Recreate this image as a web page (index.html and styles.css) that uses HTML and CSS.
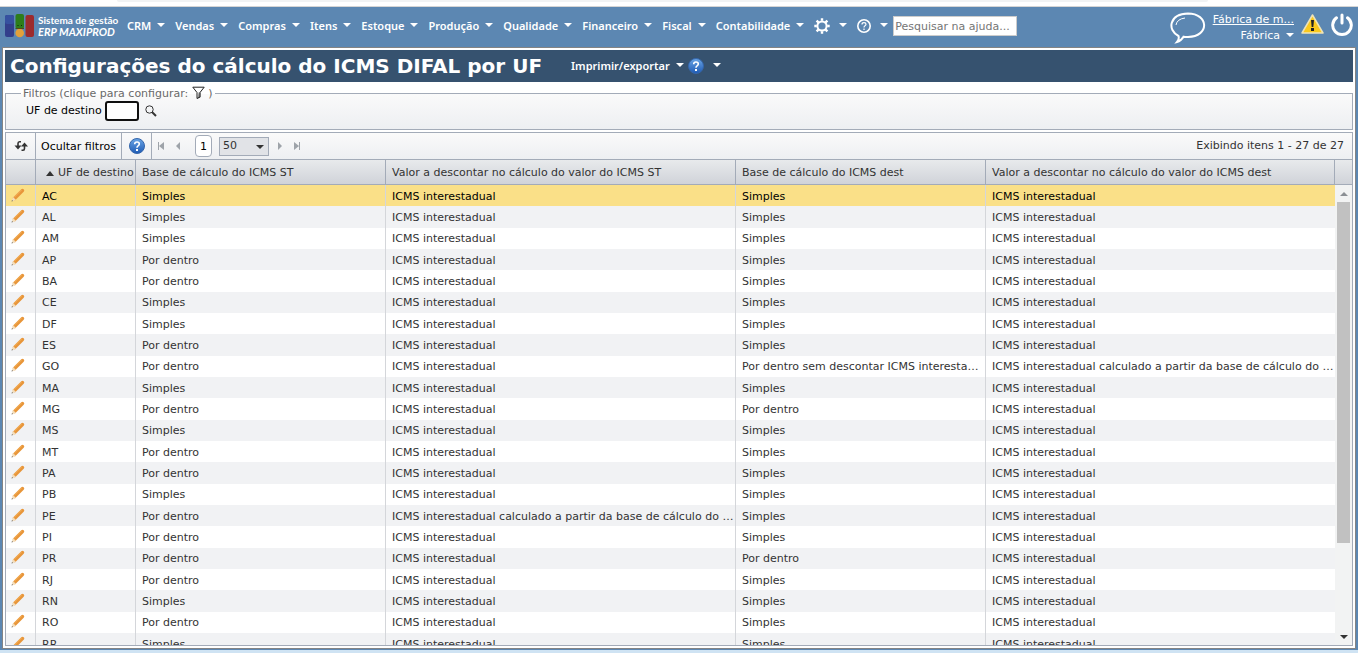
FILE: index.html
```
<!DOCTYPE html>
<html lang="pt-BR">
<head>
  <meta charset="UTF-8">
  <meta name="viewport" content="width=device-width, initial-scale=1.0">
  <title>Configurações do cálculo do ICMS DIFAL por UF</title>
  <link rel="stylesheet" href="styles.css">
</head>
<body>

<!-- Shared icons -->
<svg class="defs" width="0" height="0" aria-hidden="true">
  <defs>
    <linearGradient id="blue" x1="0" y1="0" x2="0" y2="1">
      <stop offset="0" stop-color="#6aa5e6"/>
      <stop offset="1" stop-color="#1f5bb4"/>
    </linearGradient>
  </defs>
  <symbol id="pencil" viewBox="0 0 14 14">
    <path d="M3.500 10.500L11.500 2.500" stroke="#e8963a" stroke-width="3.400" stroke-linecap="round"/>
    <path d="M3 9.500L10.500 2" stroke="#f4b35e" stroke-width="1"/>
    <path d="M.8 13.200L2 9l3 3z" fill="#f3dcb8"/>
    <path d="M.6 13.400l.4-1.300.9.900z" fill="#444"/>
  </symbol>
  <symbol id="help" viewBox="0 0 16 16">
    <circle cx="8" cy="8" r="7.500" fill="url(#blue)" stroke="#3566ab"/>
    <path d="M5.700 6.200q0-2.200 2.300-2.200t2.300 2q0 1-1.200 1.800T8 9.700" fill="none" stroke="#fff" stroke-width="1.600"/>
    <rect x="7" y="11" width="2" height="2" fill="#fff"/>
  </symbol>
</svg>

<div class="browser-edge"></div>

<header class="topbar">
  <a href="#" class="brand">
    <svg width="30" height="24" viewBox="0 0 30 24" aria-hidden="true">
      <rect x="0" y="1" width="9" height="22" rx="2" fill="#333f8c"/>
      <rect x="0" y="1" width="9" height="9" rx="2" fill="#3651a0"/>
      <rect x="10.500" y="0" width="8.500" height="15" rx="2" fill="#2d7d1a"/>
      <rect x="20.500" y="1" width="8.500" height="22" rx="2" fill="#9c2b2d"/>
      <circle cx="14.700" cy="19" r="4.300" fill="#e2a03a"/>
      <path d="M10.500 14.500h8.500" stroke="#514a18"/>
      <path d="M12.500 11.500h1M16 11.500h1" stroke="#0c2c06"/>
    </svg>
    <span class="brand-text">Sistema de gestão<em>ERP MAXIPROD</em></span>
  </a>

  <nav class="menu">
    <a href="#">CRM</a>
    <a href="#">Vendas</a>
    <a href="#">Compras</a>
    <a href="#">Itens</a>
    <a href="#">Estoque</a>
    <a href="#">Produção</a>
    <a href="#">Qualidade</a>
    <a href="#">Financeiro</a>
    <a href="#">Fiscal</a>
    <a href="#">Contabilidade</a>
    <a href="#" class="menu-icon" aria-label="Configurações">
      <svg width="16" height="16" viewBox="0 0 16 16" fill="none" stroke="#fff">
        <circle cx="8" cy="8" r="4.600" stroke-width="2"/>
        <path d="M8 .3v2.500M8 13.200v2.500M.3 8h2.500M13.200 8h2.500M2.600 2.600l1.800 1.800M11.600 11.600l1.800 1.800M13.400 2.600l-1.800 1.800M4.400 11.600l-1.800 1.800" stroke-width="2.400"/>
      </svg>
    </a>
    <a href="#" class="menu-icon" aria-label="Ajuda">
      <svg width="14" height="14" viewBox="0 0 14 14" fill="none" stroke="#fff">
        <circle cx="7" cy="7" r="6.200" stroke-width="1.600"/>
        <path d="M5 5.500q0-1.800 2-1.800t2 1.600q0 .9-1 1.400T7 8.500M7 9.500v1.500" stroke-width="1.200"/>
      </svg>
    </a>
  </nav>

  <input type="text" class="help-search" placeholder="Pesquisar na ajuda..." aria-label="Pesquisar na ajuda">

  <div class="account">
    <a href="#" aria-label="Chat">
      <svg width="36" height="32" viewBox="0 0 36 32" fill="none" stroke="#fff">
        <path d="M8.500 24C-3 18-1 2 18 1.500c21 0 22 23 0 23.500-1.500 0-3 0-4.500-.3Q11 29 7 30q2.500-3 1.500-6z" stroke-width="2"/>
        <path d="M6 13q1-6 9-7" stroke-width="1"/>
      </svg>
    </a>
    <div class="account-names">
      <a href="#" class="company">Fábrica de m...</a>
      <a href="#" class="user">Fábrica</a>
    </div>
    <a href="#" aria-label="Avisos">
      <svg width="23" height="22" viewBox="0 0 23 22">
        <path d="M11.500 3L22 21H1z" fill="#fbc91d" stroke="#efe3b6" stroke-width="1.500" stroke-linejoin="round"/>
        <path d="M10 8h3l-.7 7h-1.600z" fill="#222"/>
        <rect x="10" y="16" width="3" height="3" fill="#222"/>
      </svg>
    </a>
    <a href="#" aria-label="Sair">
      <svg width="22" height="26" viewBox="0 0 22 26" fill="none" stroke="#fff" stroke-width="3" stroke-linecap="round">
        <path d="M5.500 5.800a9.300 9.300 0 1 0 11 0M11 3v8"/>
      </svg>
    </a>
  </div>
</header>

<main class="panel">
  <div class="title-bar">
    <h1>Configurações do cálculo do ICMS DIFAL por UF</h1>
    <a href="#" class="export">Imprimir/exportar</a>
    <a href="#" class="title-help" aria-label="Ajuda"><svg width="16" height="16"><use href="#help"/></svg></a>
  </div>

  <fieldset class="filters">
    <legend>Filtros (clique para configurar:
      <svg width="13" height="13" viewBox="0 0 13 13" aria-hidden="true">
        <path d="M6.500 6.500h2v5l-3 1z" fill="#999"/>
        <path d="M.8 1.200h11.400L8 6.500V11l-3 1.500v-6z" fill="none" stroke="#222"/>
      </svg> )
    </legend>
    <label for="uf">UF de destino</label>
    <input type="text" id="uf">
    <button type="button" class="search-btn" aria-label="Buscar">
      <svg width="12" height="12" viewBox="0 0 12 12" fill="none" stroke="#333">
        <circle cx="4.500" cy="4.500" r="3.700"/>
        <path d="M7 7l4 4" stroke-width="2"/>
      </svg>
    </button>
  </fieldset>

  <section class="grid">
    <div class="toolbar">
      <button type="button" class="refresh" aria-label="Atualizar">
        <svg width="14" height="12" viewBox="0 0 14 12" fill="none" stroke="#333" stroke-width="1.600">
          <path d="M7 1.800H5.500Q4 1.800 4 3.500V7M7.500 10.200H9q1.500 0 1.500-1.700V5"/>
          <path d="M.5 5.500h7L4 9.500zM7 6.500h7L10.500 2.500z" fill="#333" stroke="none"/>
        </svg>
      </button>
      <button type="button" class="toggle-filters">Ocultar filtros</button>
      <button type="button" class="tool-help" aria-label="Ajuda"><svg width="16" height="16"><use href="#help"/></svg></button>
      <div class="pager">
        <button type="button" aria-label="Primeira página"><svg width="8" height="8" viewBox="0 0 8 8"><path d="M1 0h1v8H1zM7 0v8L2 4z"/></svg></button>
        <button type="button" aria-label="Página anterior"><svg width="8" height="8" viewBox="0 0 8 8"><path d="M6 0v8L2 4z"/></svg></button>
        <button type="button" class="page">1</button>
        <span class="page-size">
          <select aria-label="Itens por página"><option>50</option></select>
        </span>
        <button type="button" aria-label="Próxima página"><svg width="8" height="8" viewBox="0 0 8 8"><path d="M2 0v8l4-4z"/></svg></button>
        <button type="button" aria-label="Última página"><svg width="8" height="8" viewBox="0 0 8 8"><path d="M6 0h1v8H6zM1 0v8l5-4z"/></svg></button>
      </div>
      <span class="count">Exibindo itens 1 - 27 de 27</span>
    </div>

    <div class="grid-body">
      <div class="grid-scroll">
        <table>
          <colgroup>
            <col class="col-edit">
            <col class="col-uf">
            <col class="col-base">
            <col class="col-valor">
            <col class="col-base">
            <col>
          </colgroup>
          <thead>
            <tr>
              <th></th>
              <th class="sorted">UF de destino</th>
              <th>Base de cálculo do ICMS ST</th>
              <th>Valor a descontar no cálculo do valor do ICMS ST</th>
              <th>Base de cálculo do ICMS dest</th>
              <th>Valor a descontar no cálculo do valor do ICMS dest</th>
            </tr>
          </thead>
          <tbody id="rows"></tbody>
        </table>
      </div>
      <div class="scrollbar" aria-hidden="true">
        <div class="scroll-head"></div>
        <div class="scroll-arrow up"></div>
        <div class="scroll-track"><div class="scroll-thumb"></div></div>
        <div class="scroll-arrow down"></div>
      </div>
    </div>
  </section>
</main>

<script src="script.js"></script>
</body>
</html>
```
FILE: styles.css
```
* {
  margin: 0;
  padding: 0;
  box-sizing: border-box;
}

body {
  display: flex;
  flex-direction: column;
  height: 100vh;
  overflow: hidden;
  background: #5c87b2;
  border-bottom: 3px solid #cfe3f3;
  font-family: Verdana, "DejaVu Sans", sans-serif;
  font-size: 11px;
  color: #333;
}

a {
  color: #fff;
  text-decoration: none;
}

button {
  background: none;
  border: none;
  font: inherit;
  color: inherit;
  cursor: pointer;
}

svg {
  display: block;
}

.defs {
  position: absolute;
}

.browser-edge {
  height: 7px;
  flex: none;
  background: #fff;
  border-bottom: 1px solid #d5d5d5;
}

.browser-edge::before {
  content: "";
  display: block;
  height: 2px;
  margin: 0 150px 0 117px;
  background: #f1f3f4;
  border-radius: 0 0 6px 6px;
}

/* Top menu */
.topbar {
  display: flex;
  align-items: flex-start;
  flex: none;
  height: 40px;
  padding: 0 5px;
  color: #fff;
}

.brand {
  display: flex;
  gap: 3px;
  padding-top: 7px;
  width: 122px;
}

.brand-text {
  font: 700 10px/12px Lato, sans-serif;
  white-space: nowrap;
}

.brand-text em {
  display: block;
  font-size: 11px;
}

.menu {
  display: flex;
  gap: 10px;
  padding-top: 11px;
  font: 600 11px/16px "Noto Sans", sans-serif;
}

.menu a,
.export,
.user,
.title-help {
  display: flex;
  align-items: center;
  white-space: nowrap;
}

/* Drop-down carets */
.menu a::after,
.export::after,
.user::after,
.title-help::after {
  content: "";
  margin: 0 0 3px 6px;
  border: 4px solid transparent;
  border-top-color: #fff;
  border-bottom: 0;
}

.menu .menu-icon::after,
.title-help::after {
  margin-left: 9px;
}

.help-search {
  width: 124px;
  height: 20px;
  margin: 9px 0 0 5px;
  padding: 0 1px;
  border: 1px solid #ccc;
  background: #fff;
  font: 11px Verdana, "DejaVu Sans", sans-serif;
}

.help-search::placeholder {
  color: #757575;
}

.account {
  display: flex;
  align-items: flex-start;
  gap: 7px;
  margin-left: auto;
  padding-top: 5px;
}

.account-names {
  display: flex;
  flex-direction: column;
  align-items: flex-end;
  line-height: 16px;
}

.company {
  text-decoration: underline;
}

/* Page panel */
.panel {
  display: flex;
  flex-direction: column;
  flex: 1;
  min-height: 0;
  margin: 0 2px 1px;
  padding: 2px;
  border: 1px solid #848484;
  background: #fff;
}

.title-bar {
  display: flex;
  align-items: center;
  flex: none;
  height: 32px;
  padding-left: 5px;
  background: #36526f;
  color: #fff;
}

.title-bar h1 {
  width: 561px;
  font-size: 20px;
  line-height: 28px;
  white-space: nowrap;
}

.export {
  font: 600 11px/16px "Noto Sans", sans-serif;
}

.title-help {
  margin-left: 4px;
}

.filters {
  flex: none;
  height: 44px;
  margin: 4px 0 2px;
  padding: 0 20px;
  border: 1px solid #a3abb8;
  background: linear-gradient(#fafafa, #edeff2);
}

.filters legend {
  margin-left: -5px;
  padding: 0 2px;
  line-height: 15px;
  color: #696969;
}

.filters legend svg {
  display: inline-block;
  vertical-align: -2px;
}

.filters input {
  width: 34px;
  height: 20px;
  border: 2px solid #101010;
  border-radius: 3px;
  vertical-align: middle;
}

.filters label {
  color: #000;
}

.search-btn {
  margin-left: 2px;
  vertical-align: middle;
}

/* Data grid */
.grid {
  display: flex;
  flex-direction: column;
  flex: 1;
  min-height: 0;
  border: 1px solid #a3abb8;
}

.toolbar {
  display: flex;
  flex: none;
  height: 27px;
  border-bottom: 1px solid #a3abb8;
  background: linear-gradient(#fafafa, #edeff2);
  color: #000;
}

.toolbar > button {
  display: flex;
  align-items: center;
  justify-content: center;
  border-right: 1px solid #a3abb8;
}

.refresh,
.tool-help {
  width: 30px;
}

.toggle-filters {
  width: 86px;
}

.pager {
  display: flex;
  align-items: center;
  gap: 5px;
  padding-left: 3px;
}

.pager button {
  display: flex;
  align-items: center;
  justify-content: center;
  width: 12px;
  height: 22px;
}

.pager svg {
  fill: #9ea3a9;
}

.pager .page {
  width: 17px;
  margin: 0 2px 0 6px;
  border: 1px solid #a3abb8;
  border-radius: 4px;
  background: #fff;
}

.page-size {
  position: relative;
}

.page-size::after {
  content: "";
  position: absolute;
  top: 8px;
  right: 5px;
  border: 4px solid transparent;
  border-top-color: #333;
  border-bottom: 0;
  pointer-events: none;
}

.page-size select {
  display: block;
  appearance: none;
  width: 50px;
  height: 19px;
  padding: 0 0 2px 3px;
  border: 1px solid #a3abb8;
  background: #e1e3e7;
  font: inherit;
  color: #333;
}

.count {
  margin-left: auto;
  padding-right: 8px;
  line-height: 25px;
  color: #333;
}

.grid-body {
  display: flex;
  flex: 1;
  min-height: 0;
}

.grid-scroll {
  flex: 1;
  min-width: 0;
  overflow-y: auto;
  scrollbar-width: none;
}

table {
  width: 100%;
  height: 601px;
  table-layout: fixed;
  border-spacing: 0;
}

.col-edit {
  width: 30px;
}

.col-uf {
  width: 100px;
}

.col-base {
  width: 250px;
}

.col-valor {
  width: 350px;
}

th,
td {
  overflow: hidden;
  padding: 0 1px 0 6px;
  border-right: 1px solid #d4d6da;
  text-align: left;
  text-overflow: ellipsis;
  white-space: nowrap;
}

td {
  padding-top: 1px;
}

th {
  position: sticky;
  top: 0;
  height: 25px;
  border-right-color: #a3abb8;
  border-bottom: 1px solid #a3abb8;
  background: linear-gradient(#e8eaec, #d0d3d9);
  font-weight: normal;
}

td:last-child {
  border-right: none;
}

td:first-child {
  padding: 0 5px 2px;
}

.sorted {
  padding: 0 0 0 10px;
}

.sorted::before {
  content: "";
  display: inline-block;
  margin-right: 4px;
  border: 4px solid transparent;
  border-top: 0;
  border-bottom: 5px solid #333;
}

tbody tr:nth-child(even) {
  background: #f1f2f4;
}

tbody tr.selected {
  background: #fae088;
  color: #000;
}

/* Scrollbar column */
.scrollbar {
  display: flex;
  flex-direction: column;
  width: 17px;
  background: #f2f3f3;
}

.scroll-head {
  height: 25px;
  border-bottom: 1px solid #a3abb8;
  background: linear-gradient(#e8eaec, #d0d3d9);
}

.scroll-arrow {
  display: flex;
  align-items: center;
  justify-content: center;
  height: 17px;
}

.scroll-arrow::before {
  content: "";
  border: 4px solid transparent;
}

.up::before {
  border-top: 0;
  border-bottom-color: #8b8f94;
}

.down::before {
  border-bottom: 0;
  border-top-color: #333;
}

.scroll-track {
  flex: 1;
  padding: 0 2px;
}

.scroll-thumb {
  height: 80%;
  background: #c1c1c1;
}
```
FILE: script.js
```
const INTER = 'ICMS interestadual';
const INTER_CALC = 'ICMS interestadual calculado a partir da base de cálculo do ICMS';

// UF, base ST, valor ST, base dest, valor dest
const ufs = [
  ['AC', 'Simples', INTER, 'Simples', INTER],
  ['AL', 'Simples', INTER, 'Simples', INTER],
  ['AM', 'Simples', INTER, 'Simples', INTER],
  ['AP', 'Por dentro', INTER, 'Simples', INTER],
  ['BA', 'Por dentro', INTER, 'Simples', INTER],
  ['CE', 'Simples', INTER, 'Simples', INTER],
  ['DF', 'Simples', INTER, 'Simples', INTER],
  ['ES', 'Por dentro', INTER, 'Simples', INTER],
  ['GO', 'Por dentro', INTER, 'Por dentro sem descontar ICMS interestadual', INTER_CALC],
  ['MA', 'Simples', INTER, 'Simples', INTER],
  ['MG', 'Por dentro', INTER, 'Por dentro', INTER],
  ['MS', 'Simples', INTER, 'Simples', INTER],
  ['MT', 'Por dentro', INTER, 'Simples', INTER],
  ['PA', 'Por dentro', INTER, 'Simples', INTER],
  ['PB', 'Simples', INTER, 'Simples', INTER],
  ['PE', 'Por dentro', INTER_CALC, 'Simples', INTER],
  ['PI', 'Por dentro', INTER, 'Simples', INTER],
  ['PR', 'Por dentro', INTER, 'Por dentro', INTER],
  ['RJ', 'Por dentro', INTER, 'Simples', INTER],
  ['RN', 'Simples', INTER, 'Simples', INTER],
  ['RO', 'Por dentro', INTER, 'Simples', INTER],
  ['RR', 'Simples', INTER, 'Simples', INTER],
  ['RS', 'Por dentro', INTER, 'Simples', INTER],
  ['SC', 'Por dentro', INTER, 'Simples', INTER],
  ['SE', 'Por dentro', INTER, 'Simples', INTER],
  ['SP', 'Por dentro', INTER, 'Simples', INTER],
  ['TO', 'Por dentro', INTER, 'Simples', INTER]
];

document.getElementById('rows').innerHTML = ufs.map((row, i) => `
  <tr${i === 0 ? ' class="selected"' : ''}>
    <td><a href="#" aria-label="Editar ${row[0]}"><svg width="14" height="14"><use href="#pencil"/></svg></a></td>
    ${row.map(text => `<td>${text}</td>`).join('')}
  </tr>`).join('');
```
